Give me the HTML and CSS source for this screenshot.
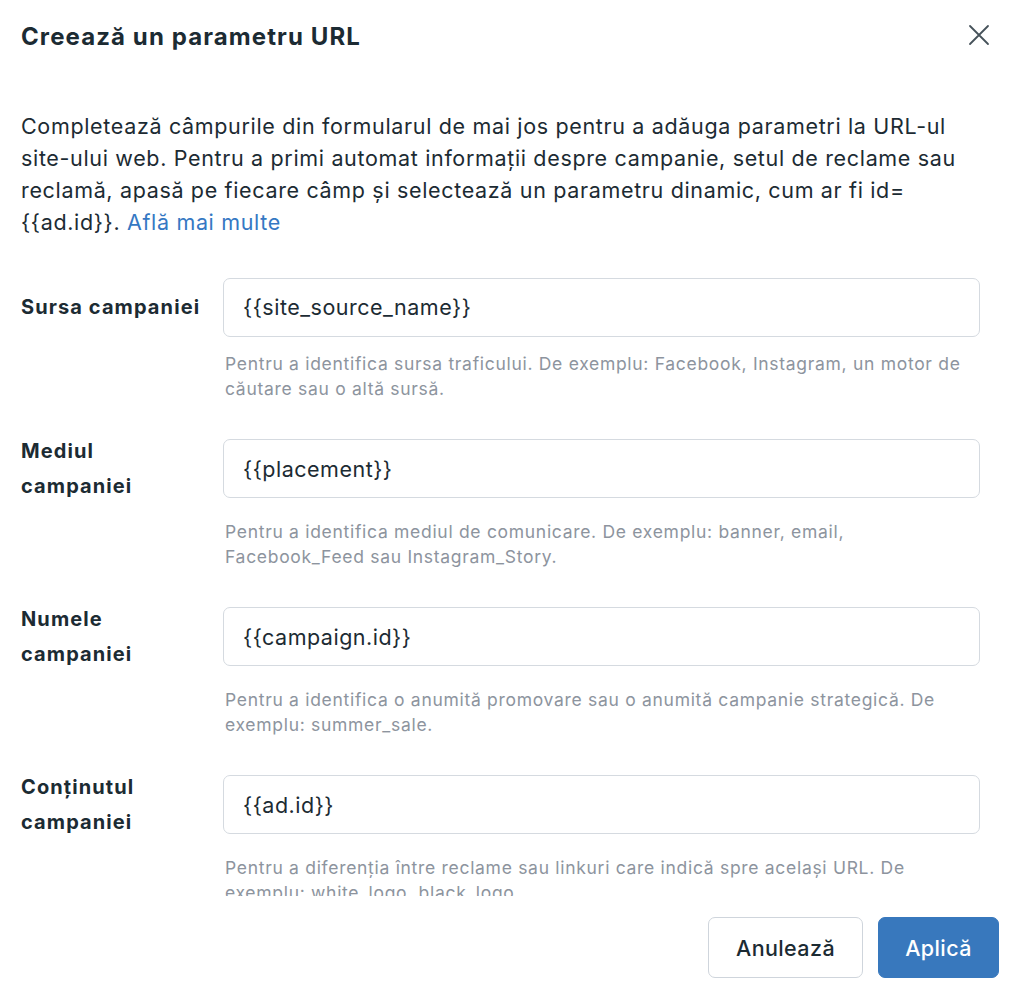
FILE: index.html
```html
<!DOCTYPE html>
<html lang="ro">
<head>
  <meta charset="UTF-8">
  <meta name="viewport" content="width=device-width, initial-scale=1">
  <title>Creează un parametru URL</title>
  <link rel="stylesheet" href="styles.css">
</head>
<body>
  <div class="dialog">
    <header class="dialog-header">
      <h1>Creează un parametru URL</h1>
      <button class="close" aria-label="Închide">
        <svg width="22" height="22" viewBox="0 0 22 22"><path d="M2 2 L20 20 M20 2 L2 20" stroke="#46525a" stroke-width="1.8" stroke-linecap="round" fill="none"/></svg>
      </button>
    </header>

    <div class="dialog-body">
      <p class="intro">Completează câmpurile din formularul de mai jos pentru a adăuga parametri la URL-ul site-ului web. Pentru a primi automat informații despre campanie, setul de reclame sau reclamă, apasă pe fiecare câmp și selectează un parametru dinamic, cum ar fi id= {{ad.id}}. <a href="#">Află mai multe</a></p>

      <div class="field">
        <label for="utm-source">Sursa campaniei</label>
        <input id="utm-source" type="text" value="{{site_source_name}}">
        <p class="help">Pentru a identifica sursa traficului. De exemplu: Facebook, Instagram, un motor de căutare sau o altă sursă.</p>
      </div>

      <div class="field">
        <label for="utm-medium">Mediul campaniei</label>
        <input id="utm-medium" type="text" value="{{placement}}">
        <p class="help">Pentru a identifica mediul de comunicare. De exemplu: banner, email, Facebook_Feed sau Instagram_Story.</p>
      </div>

      <div class="field">
        <label for="utm-campaign">Numele campaniei</label>
        <input id="utm-campaign" type="text" value="{{campaign.id}}">
        <p class="help">Pentru a identifica o anumită promovare sau o anumită campanie strategică. De exemplu: summer_sale.</p>
      </div>

      <div class="field">
        <label for="utm-content">Conținutul campaniei</label>
        <input id="utm-content" type="text" value="{{ad.id}}">
        <p class="help">Pentru a diferenţia între reclame sau linkuri care indică spre acelaşi URL. De exemplu: white_logo, black_logo.</p>
      </div>
    </div>

    <footer class="dialog-footer">
      <button class="btn">Anulează</button>
      <button class="btn btn-primary">Aplică</button>
    </footer>
  </div>
</body>
</html>
```

FILE: styles.css
```css
body {
  margin: 0;
  font-family: Inter, "Noto Sans", sans-serif;
  color: #1c2b33;
  background: #fff;
}
.dialog {
  width: 1024px;
  height: 996px;
  display: flex;
  flex-direction: column;
}
.dialog-header {
  display: flex;
  align-items: center;
  justify-content: space-between;
  padding: 18px 34px 0 21px;
  height: 38px;
}
h1 {
  margin: 0;
  font-size: 24px;
  font-weight: 700;
  letter-spacing: 1.1px;
}
.close {
  border: none;
  background: none;
  padding: 0;
  width: 22px;
  height: 22px;
  margin-top: -4px;
  cursor: pointer;
}
.dialog-body {
  height: 841px;
  overflow: hidden;
  padding: 0 44px 0 21px;
}
.intro {
  margin: 54px 0 40px;
  font-size: 21.5px;
  line-height: 32px;
  letter-spacing: 0.66px;
}
.intro a {
  color: #3578c3;
  text-decoration: none;
}
/* label + input pe un rand, textul de ajutor dedesubt */
.field {
  display: grid;
  grid-template-columns: 202px 1fr;
  align-items: center;
  margin-bottom: 31px;
}
.field label {
  font-size: 20px;
  font-weight: 700;
  line-height: 35px;
  letter-spacing: 1.1px;
  padding: 1px 20px 1px 0;
}
.field input {
  height: 59px;
  box-sizing: border-box;
  border: 1px solid #d5dae0;
  border-radius: 7px;
  padding: 0 19px;
  font-family: inherit;
  font-size: 21.5px;
  letter-spacing: 0.5px;
  color: #1c2b33;
  outline: none;
}
.help {
  grid-column: 2;
  margin: 14px 0 0 2px;
  font-size: 17.5px;
  line-height: 25.5px;
  letter-spacing: 0.7px;
  color: #8d949e;
}
.dialog-footer {
  display: flex;
  justify-content: flex-end;
  gap: 15px;
  padding: 21px 25px 18px 0;
}
.btn {
  height: 61px;
  padding: 0 26px;
  min-width: 155px;
  border: 1px solid #cfd5dc;
  border-radius: 7px;
  background: #fff;
  color: #1c2b33;
  font-family: inherit;
  font-size: 21.5px;
  font-weight: 500;
  letter-spacing: 0.4px;
}
.btn-primary {
  min-width: 121px;
  background: #3878bd;
  border-color: #3878bd;
  color: #fff;
}
```
